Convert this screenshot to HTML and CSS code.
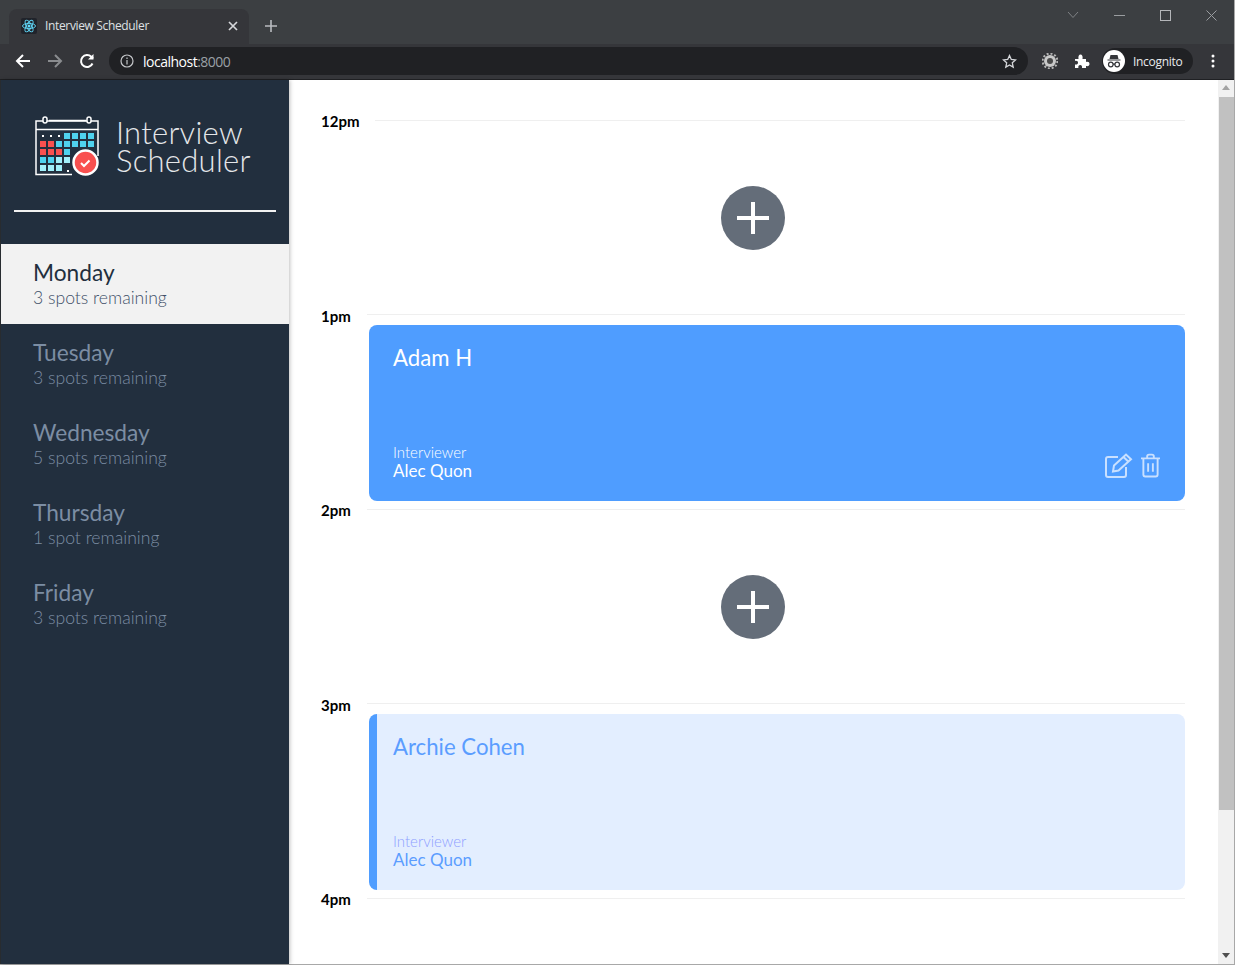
FILE: index.html
```html
<!DOCTYPE html>
<html lang="en">
<head>
  <meta charset="UTF-8">
  <title>Interview Scheduler</title>
  <link rel="stylesheet" href="styles.css">
</head>
<body>
  <div class="window">
    <div class="tabstrip">
      <div class="tab">
        <svg class="favicon" width="16" height="16" viewBox="0 0 16 16" fill="none" stroke="#61dafb" stroke-width="0.9">
          <rect width="16" height="16" rx="2" fill="#20232a" stroke="none"/>
          <circle cx="8" cy="8" r="1.5" fill="#61dafb" stroke="none"/>
          <ellipse cx="8" cy="8" rx="6.5" ry="2.6"/>
          <ellipse cx="8" cy="8" rx="6.5" ry="2.6" transform="rotate(60 8 8)"/>
          <ellipse cx="8" cy="8" rx="6.5" ry="2.6" transform="rotate(120 8 8)"/>
        </svg>
        <span class="tab-title">Interview Scheduler</span>
        <svg class="tab-close" width="10" height="10" viewBox="0 0 10 10" stroke="#d5d7da" stroke-width="1.7"><path d="M1 1l8 8M9 1l-8 8"/></svg>
      </div>
      <svg class="new-tab" width="14" height="14" viewBox="0 0 14 14" stroke="#b9bcc0" stroke-width="1.6"><path d="M7 1v12M1 7h12"/></svg>
      <div class="win-controls">
        <svg width="12" height="8" viewBox="0 0 12 8" fill="none" stroke="#7e8184"><path d="M1 1l5 5.500 5-5.500"/></svg>
        <svg width="11" height="11" viewBox="0 0 11 11" stroke="#9a9da0"><path d="M0 5.500h11"/></svg>
        <svg width="11" height="11" viewBox="0 0 11 11" fill="none" stroke="#b4b6b9"><rect x="0.500" y="0.500" width="10" height="10"/></svg>
        <svg width="11" height="11" viewBox="0 0 11 11" stroke="#9a9da0"><path d="M0.500 0.500l10 10M10.500 0.500l-10 10"/></svg>
      </div>
    </div>

    <div class="toolbar">
      <svg class="nav-icon" width="16" height="16" viewBox="0 0 16 16" fill="none" stroke="#fff" stroke-width="2"><path d="M15 8H2M8 2L2 8l6 6"/></svg>
      <svg class="nav-icon" width="16" height="16" viewBox="0 0 16 16" fill="none" stroke="#8a8c8f" stroke-width="2"><path d="M1 8h13M8 2l6 6-6 6"/></svg>
      <svg class="nav-icon" width="16" height="16" viewBox="0 0 16 16" fill="none" stroke="#fff" stroke-width="2"><path d="M13.500 10.500A6 6 0 1 1 12.300 3.800L14 5.500"/><path d="M14.500 1v5.500H9" fill="#fff" stroke="none"/></svg>
      <div class="omnibox">
        <svg width="14" height="14" viewBox="0 0 14 14" fill="none" stroke="#c4c6c9" stroke-width="1.200"><circle cx="7" cy="7" r="6"/><path d="M7 6v4.500M7 3.500v1.500"/></svg>
        <span class="url">localhost<span class="url-port">:8000</span></span>
        <svg class="star" width="15" height="15" viewBox="0 0 15 15" fill="none" stroke="#d5d7da" stroke-width="1.300"><path d="M7.500 1.500l1.800 4 4.200.4-3.200 2.900.9 4.300-3.700-2.200-3.700 2.200.9-4.300-3.200-2.900 4.200-.4z"/></svg>
      </div>
      <svg class="ext-gear" width="16" height="16" viewBox="0 0 16 16">
        <circle cx="8" cy="8" r="6" fill="#c9c9c9"/>
        <circle cx="8" cy="8" r="7.400" fill="none" stroke="#b5b5b5" stroke-width="2" stroke-dasharray="2 1.900"/>
        <circle cx="8" cy="8" r="3" fill="#4a4a4a"/>
      </svg>
      <svg class="ext-puzzle" width="16" height="16" viewBox="0 0 16 16" fill="#fff"><path d="M1 6h3.500C4 3 5 1.500 6.500 1.500S9 3 8.500 6H12v3c2.500-.5 3.500.5 3.500 2s-1 2.500-3.500 2v2H8c.4-2-.5-3-1.800-3S4 13 4.400 15H1v-3.500c2 .4 3-.5 3-1.800S3 7.500 1 8z"/></svg>
      <div class="profile">
        <svg width="22" height="22" viewBox="0 0 22 22">
          <circle cx="11" cy="11" r="11" fill="#fff"/>
          <path d="M7.500 5h7l1 4h-9zM4.500 9.500h13v1h-13z" fill="#35363a"/>
          <g fill="none" stroke="#35363a" stroke-width="1.200"><circle cx="7.800" cy="14.500" r="2.300"/><circle cx="14.200" cy="14.500" r="2.300"/><path d="M10 14.200h2"/></g>
        </svg>
        <span>Incognito</span>
      </div>
      <svg class="menu-dots" width="4" height="14" viewBox="0 0 4 14" fill="#fff"><circle cx="2" cy="2" r="1.500"/><circle cx="2" cy="7" r="1.500"/><circle cx="2" cy="12" r="1.500"/></svg>
    </div>

    <div class="page">
      <nav class="sidebar">
        <div class="brand">
          <svg width="67" height="63" viewBox="34 115 67 63">
            <g fill="none" stroke="#fff" stroke-width="1.500">
              <path d="M72 174.500H36V121h62v35"/>
              <path d="M36 129.500h62"/>
              <path d="M49 120.500h37"/>
              <rect x="43" y="117" width="4" height="6" rx="2" fill="#222f3e"/>
              <rect x="87" y="117" width="4" height="6" rx="2" fill="#222f3e"/>
            </g>
            <g fill="#fff">
              <rect x="42" y="135" width="2" height="2"/><rect x="50" y="135" width="2" height="2"/><rect x="58" y="135" width="2" height="2"/><rect x="67" y="170" width="2" height="2"/>
            </g>
            <g fill="#4fd2ee">
              <rect x="64" y="133" width="6" height="6"/><rect x="72" y="133" width="6" height="6"/><rect x="80" y="133" width="6" height="6"/><rect x="88" y="133" width="6" height="6"/>
              <rect x="56" y="141" width="6" height="6"/><rect x="64" y="141" width="6" height="6"/><rect x="72" y="141" width="6" height="6"/><rect x="80" y="141" width="6" height="6"/><rect x="88" y="141" width="6" height="6"/>
              <rect x="64" y="149" width="6" height="6"/>
              <rect x="40" y="157" width="6" height="6"/><rect x="48" y="157" width="6" height="6"/>
            </g>
            <g fill="#f9504f">
              <rect x="40" y="141" width="6" height="6"/><rect x="48" y="141" width="6" height="6"/>
              <rect x="40" y="149" width="6" height="6"/><rect x="48" y="149" width="6" height="6"/><rect x="56" y="149" width="6" height="6"/>
            </g>
            <g fill="#a2f0fb">
              <rect x="56" y="157" width="6" height="6"/><rect x="64" y="157" width="6" height="6"/>
              <rect x="40" y="165" width="6" height="6"/><rect x="48" y="165" width="6" height="6"/><rect x="56" y="165" width="6" height="6"/>
            </g>
            <circle cx="85.500" cy="162.500" r="12" fill="#f9504f" stroke="#fff" stroke-width="2.500"/>
            <path d="M81 163l3 3 5.500-5.500" fill="none" stroke="#fff" stroke-width="2"/>
          </svg>
          <div class="brand-name">Interview<br>Scheduler</div>
        </div>
        <hr class="brand-rule">
        <ul class="days">
          <li class="day day--selected"><div class="day-name">Monday</div><div class="day-spots">3 spots remaining</div></li>
          <li class="day"><div class="day-name">Tuesday</div><div class="day-spots">3 spots remaining</div></li>
          <li class="day"><div class="day-name">Wednesday</div><div class="day-spots">5 spots remaining</div></li>
          <li class="day"><div class="day-name">Thursday</div><div class="day-spots">1 spot remaining</div></li>
          <li class="day"><div class="day-name">Friday</div><div class="day-spots">3 spots remaining</div></li>
        </ul>
      </nav>

      <main class="schedule">
        <section class="slot">
          <div class="slot-head"><span class="slot-time">12pm</span><hr class="slot-line"></div>
          <div class="slot-add"><button class="add-btn"><svg width="32" height="32" viewBox="0 0 32 32" stroke="#fff" stroke-width="4"><path d="M16 0v32M0 16h32"/></svg></button></div>
        </section>

        <section class="slot">
          <div class="slot-head"><span class="slot-time">1pm</span><hr class="slot-line"></div>
          <article class="appt">
            <div class="appt-student">Adam H</div>
            <div class="appt-foot">
              <div>
                <div class="appt-label">Interviewer</div>
                <div class="appt-person">Alec Quon</div>
              </div>
              <div class="appt-actions">
                <svg width="28" height="25" viewBox="0 0 28 25" fill="none" stroke="#c9e0ff" stroke-width="2">
                  <path d="M13 4H3a2 2 0 0 0-2 2v16a2 2 0 0 0 2 2h16a2 2 0 0 0 2-2v-8"/>
                  <path d="M9 12.500L21 1.500l5 4.800L13.500 17.500 8 18.500zM18.500 4l5 4.800"/>
                </svg>
                <svg width="19" height="25" viewBox="0 0 20 25" fill="none" stroke="#c9e0ff" stroke-width="2">
                  <path d="M0 5h20M6.500 5V3a2 2 0 0 1 2-2h3a2 2 0 0 1 2 2v2M2.500 5v17a2 2 0 0 0 2 2h11a2 2 0 0 0 2-2V5M7.500 10v9M12.500 10v9"/>
                </svg>
              </div>
            </div>
          </article>
        </section>

        <section class="slot">
          <div class="slot-head"><span class="slot-time">2pm</span><hr class="slot-line"></div>
          <div class="slot-add"><button class="add-btn"><svg width="32" height="32" viewBox="0 0 32 32" stroke="#fff" stroke-width="4"><path d="M16 0v32M0 16h32"/></svg></button></div>
        </section>

        <section class="slot">
          <div class="slot-head"><span class="slot-time">3pm</span><hr class="slot-line"></div>
          <article class="appt appt--light">
            <div class="appt-student">Archie Cohen</div>
            <div class="appt-foot">
              <div>
                <div class="appt-label">Interviewer</div>
                <div class="appt-person">Alec Quon</div>
              </div>
            </div>
          </article>
        </section>

        <section class="slot">
          <div class="slot-head"><span class="slot-time">4pm</span><hr class="slot-line"></div>
        </section>
      </main>

      <div class="scrollbar">
        <div class="scroll-up"></div>
        <div class="scroll-thumb"></div>
        <div class="scroll-down"></div>
      </div>
    </div>
  </div>
</body>
</html>
```

FILE: styles.css
```css
* {
  box-sizing: border-box;
}
html, body {
  margin: 0;
  height: 100%;
  overflow: hidden;
}
body {
  font-family: Lato, "Open Sans", sans-serif;
}
.window {
  width: 1235px;
  height: 965px;
  display: flex;
  flex-direction: column;
  background: #3c3f42;
  border-right: 1px solid #a8a8a8;
  border-bottom: 1px solid #a8a8a8;
}

/* browser chrome */
.tabstrip {
  height: 44px;
  display: flex;
  padding: 9px 0 0 9px;
  align-items: flex-start;
}
.tab {
  width: 240px;
  height: 35px;
  background: #35363a;
  border-radius: 8px 8px 0 0;
  display: flex;
  align-items: center;
  padding: 0 11px 1px 12px;
  color: #dfe1e4;
  font: 12px "Open Sans", sans-serif;
}
.favicon {
  margin-right: 8px;
  flex: none;
}
.tab-title {
  flex: 1;
  letter-spacing: -0.35px;
  margin-top: -1px;
}
.new-tab {
  margin: 10px 0 0 15px;
}
.win-controls {
  margin: 0 0 0 auto;
  width: 167px;
  display: flex;
  align-items: center;
  justify-content: space-between;
  padding-right: 17px;
  height: 12px;
}
.toolbar {
  height: 36px;
  background: #35363a;
  border-bottom: 1px solid #1f2023;
  display: flex;
  align-items: center;
  padding: 0 0 1px 15px;
}
.nav-icon {
  margin-right: 16px;
  flex: none;
}
.omnibox {
  width: 919px;
  height: 28px;
  margin: 0 14px 0 -2px;
  background: #202124;
  border-radius: 14px;
  display: flex;
  align-items: center;
  padding: 0 11px;
  font: 14px "Open Sans", sans-serif;
  color: #fff;
}
.url {
  margin-left: 9px;
  flex: 1;
  letter-spacing: -0.5px;
}
.url-port {
  color: #9aa0a6;
}
.ext-gear {
  margin-left: 0;
  flex: none;
}
.ext-puzzle {
  margin-left: 16px;
  flex: none;
}
.profile {
  width: 91px;
  height: 26px;
  margin: 0 0 0 12px;
  background: #202124;
  border-radius: 13px;
  display: flex;
  align-items: center;
  padding-left: 1px;
  gap: 8px;
  color: #e8eaed;
  font: 12px "Open Sans", sans-serif;
  letter-spacing: -0.3px;
}
.menu-dots {
  margin-left: 18px;
  flex: none;
}

/* sidebar */
.page {
  flex: 1;
  display: flex;
  min-height: 0;
  background: #fff;
  border-left: 1px solid #2b2f33;
}
.sidebar {
  width: 288px;
  background: #222f3e;
  box-shadow: 1px 0 4px rgba(0, 0, 0, 0.25);
  flex: none;
}
.brand {
  display: flex;
  align-items: flex-start;
  padding: 35px 0 0 33px;
  height: 130px;
}
.brand-name {
  margin: 3px 0 0 15px;
  font-size: 31px;
  font-weight: 300;
  line-height: 28px;
  letter-spacing: 0.25px;
  color: #e4e6e9;
}
.brand-rule {
  margin: 0 13px 32px;
  border: 0;
  height: 2px;
  background: #f2f2f2;
}
.days {
  list-style: none;
  margin: 0;
  padding: 0;
}
.day {
  height: 80px;
  padding: 16px 32px 0;
  color: #7c8da3;
}
.day--selected {
  background: #f2f2f2;
  color: #222f3e;
}
.day-name {
  font-size: 22.7px;
  line-height: 25px;
}
.day-spots {
  font-size: 17.6px;
  font-weight: 300;
  line-height: 25px;
}
.day--selected .day-spots {
  color: #3f5068;
}

/* schedule */
.schedule {
  flex: 1;
  padding: 32px 33px 0 32px;
  overflow: hidden;
}
.slot {
  height: 194.5px;
}
.slot-head {
  height: 18px;
  display: flex;
  gap: 16px;
  align-items: flex-start;
}
.slot-time {
  font-size: 15px;
  font-weight: 700;
  line-height: 18px;
  color: #000;
}
.slot-line {
  flex: 1;
  margin: 7.5px 0 0;
  border: 0;
  height: 1px;
  background: #efefef;
}
.slot-add {
  height: 176px;
  display: flex;
  align-items: center;
  justify-content: center;
}
.add-btn {
  width: 64px;
  height: 64px;
  padding: 0;
  border: 0;
  border-radius: 50%;
  background: #646d79;
  display: flex;
  align-items: center;
  justify-content: center;
}
.appt {
  height: 176px;
  margin-left: 48px;
  background: #4f9dff;
  border-radius: 8px;
  color: #fff;
  padding: 19px 25px 20px 24px;
  display: flex;
  flex-direction: column;
  justify-content: space-between;
}
.appt--light {
  background: #e3eeff;
  border-left: 8px solid #4f9dff;
  padding-left: 16px;
  color: #5b9dff;
}
.appt-student {
  font-size: 22.2px;
  line-height: 28px;
}
.appt-foot {
  display: flex;
  justify-content: space-between;
  align-items: flex-end;
}
.appt-label {
  font-size: 15px;
  font-weight: 300;
  line-height: 17px;
}
.appt--light .appt-label {
  color: #8f9fff;
}
.appt-person {
  font-size: 17px;
  line-height: 20px;
}
.appt-actions {
  display: flex;
  gap: 8px;
  margin-bottom: 3px;
}

/* scrollbar */
.scrollbar {
  width: 16px;
  flex: none;
  background: #f1f1f1;
  display: flex;
  flex-direction: column;
  align-items: center;
  padding: 5px 0;
}
.scroll-up {
  border: 4px solid transparent;
  border-top: 0;
  border-bottom: 5px solid #a3a3a3;
  margin-bottom: 7px;
}
.scroll-thumb {
  width: 15px;
  height: 713px;
  background: #c1c1c1;
}
.scroll-down {
  margin-top: auto;
  margin-bottom: 1px;
  border: 4px solid transparent;
  border-bottom: 0;
  border-top: 5px solid #505050;
}
```
